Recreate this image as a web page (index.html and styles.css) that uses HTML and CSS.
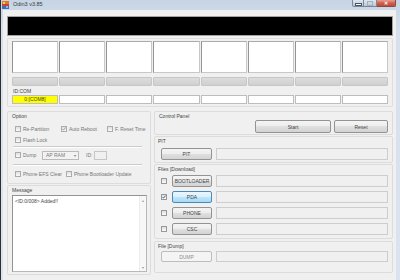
FILE: index.html
```html
<!DOCTYPE html>
<html lang="en">
<head>
  <meta charset="UTF-8">
  <title>Odin3 v3.85</title>
  <link rel="stylesheet" href="styles.css">
</head>
<body>
  <div class="window">
    <div class="titlebar">
      <svg class="appicon" width="7" height="8" viewBox="0 0 7 8">
        <rect x="0" y="0" width="7" height="3" fill="#e2762d"/>
        <rect x="1" y="1" width="2" height="2" fill="#f5d34a"/>
        <rect x="0" y="3" width="7" height="2" fill="#c9443a"/>
        <rect x="0" y="5" width="7" height="3" fill="#3f6fb5"/>
        <rect x="4" y="5" width="2" height="2" fill="#8fb6e4"/>
      </svg>
      <span class="title">Odin3 v3.85</span>
      <div class="controls">
        <span class="ctl min"><i></i></span>
        <span class="ctl max"><i></i></span>
        <span class="ctl close">✕</span>
      </div>
    </div>

    <div class="client">
      <div class="status"></div>

      <div class="ports">
        <div class="slots">
          <div class="slot"></div><div class="slot"></div><div class="slot"></div><div class="slot"></div>
          <div class="slot"></div><div class="slot"></div><div class="slot"></div><div class="slot"></div>
        </div>
        <div class="bars">
          <div class="bar"></div><div class="bar"></div><div class="bar"></div><div class="bar"></div>
          <div class="bar"></div><div class="bar"></div><div class="bar"></div><div class="bar"></div>
        </div>
        <div class="idlabel">ID:COM</div>
        <div class="coms">
          <div class="com on">0:[COM8]</div><div class="com"></div><div class="com"></div><div class="com"></div>
          <div class="com"></div><div class="com"></div><div class="com"></div><div class="com"></div>
        </div>
      </div>

      <div class="main">
        <div class="left">
          <div class="group option">
            <div class="glabel">Option</div>
            <div class="orow first">
              <label class="opt w46"><span class="cb"></span>Re-Partition</label>
              <label class="opt w46"><span class="cb checked"><svg width="4" height="4" viewBox="0 0 4 4"><polyline points="0.5,2 1.5,3.2 3.5,0.6" fill="none" stroke="#8a8a8a" stroke-width="0.8"/></svg></span>Auto Reboot</label>
              <label class="opt"><span class="cb"></span>F. Reset Time</label>
            </div>
            <div class="orow">
              <label class="opt"><span class="cb"></span>Flash Lock</label>
            </div>
            <div class="sep"></div>
            <div class="orow mid">
              <label class="opt w27"><span class="cb"></span>Dump</label>
              <div class="combo">AP RAM<span class="arrow">▾</span></div>
              <span class="idtxt">ID:</span>
              <div class="idbox"></div>
            </div>
            <div class="sep low"></div>
            <div class="orow last">
              <label class="opt w51"><span class="cb"></span>Phone EFS Clear</label>
              <label class="opt"><span class="cb"></span>Phone Bootloader Update</label>
            </div>
          </div>

          <div class="group message">
            <div class="glabel">Message</div>
            <div class="log">
              <div class="logtext">&lt;ID:0/008&gt; Added!!</div>
              <div class="scroll"><span>▴</span><span>▾</span></div>
            </div>
          </div>
        </div>

        <div class="right">
          <div class="group control">
            <div class="glabel">Control Panel</div>
            <div class="ctrlbtns">
              <div class="btn start">Start</div>
              <div class="btn reset">Reset</div>
            </div>
          </div>

          <div class="group pit">
            <div class="glabel">PIT</div>
            <div class="frow">
              <div class="btn wide">PIT</div>
              <div class="path"></div>
            </div>
          </div>

          <div class="group files">
            <div class="glabel">Files [Download]</div>
            <div class="frow">
              <span class="cb"></span>
              <div class="btn file">BOOTLOADER</div>
              <div class="path"></div>
            </div>
            <div class="frow">
              <span class="cb checked"><svg width="4" height="4" viewBox="0 0 4 4"><polyline points="0.5,2 1.5,3.2 3.5,0.6" fill="none" stroke="#2a4d8f" stroke-width="0.8"/></svg></span>
              <div class="btn file hot">PDA</div>
              <div class="path"></div>
            </div>
            <div class="frow">
              <span class="cb"></span>
              <div class="btn file">PHONE</div>
              <div class="path"></div>
            </div>
            <div class="frow">
              <span class="cb"></span>
              <div class="btn file">CSC</div>
              <div class="path"></div>
            </div>
          </div>

          <div class="group dump">
            <div class="glabel">File [Dump]</div>
            <div class="frow">
              <div class="btn wide off">DUMP</div>
              <div class="path"></div>
            </div>
          </div>
        </div>
      </div>
    </div>
  </div>
</body>
</html>
```

FILE: styles.css
```css
body {
  margin: 0;
  width: 400px;
  height: 280px;
  overflow: hidden;
  background: #1c1c1c;
  font-family: "Liberation Sans", Arial, sans-serif;
  font-size: 5px;
  color: #3c3c3c;
}
.window {
  box-sizing: border-box;
  height: 280px;
  display: flex;
  flex-direction: column;
  padding: 0 4px 0 2px;
  border-left: 1px solid #2e2e2e;
  background: linear-gradient(#c6d4e4, #d6e1ec 30px, #dbe4ee);
}
.titlebar {
  height: 10px;
  display: flex;
  align-items: flex-start;
}
.appicon {
  margin: 1px 0 0 -1px;
}
.title {
  margin-left: 4px;
  font-size: 5.5px;
  line-height: 9px;
  color: #3a3a3a;
}
.controls {
  margin-left: auto;
  display: flex;
}
.ctl {
  height: 7px;
  box-sizing: border-box;
  border: 1px solid #7b8794;
  border-top: none;
  display: flex;
  align-items: center;
  justify-content: center;
}
.min, .max {
  width: 12px;
  background: linear-gradient(#dfe7f0, #bac8d8);
}
.min { border-radius: 0 0 0 2px; }
.max { width: 13px; border-left: none; }
.min i {
  width: 5px;
  height: 1px;
  margin-top: 2px;
  background: #fff;
  border: 0.5px solid #4a5563;
}
.max i {
  width: 4px;
  height: 3px;
  border: 1px solid #a4b0be;
}
.close {
  width: 19px;
  border-left: none;
  border-color: #8a4a43;
  border-radius: 0 0 2px 0;
  background: linear-gradient(#e6a195, #d0604f 50%, #c24a36);
  color: #fff;
  font-size: 5px;
  font-weight: bold;
}
.client {
  flex: 1;
  background: #f0f0f0;
  padding: 6px 3px 0 4px;
}
.status {
  height: 18px;
  background: #000;
  border: 1px solid #a3a3a3;
}
.ports {
  margin-top: 2px;
  border: 1px solid #dedede;
  border-radius: 2px;
  padding: 2px 4px 2px 4px;
}
.slots, .bars, .coms {
  display: grid;
  grid-template-columns: repeat(8, 1fr);
  column-gap: 1px;
}
.slots { height: 32px; }
.slot {
  background: #fff;
  border: 1px solid #c8c8c8;
  border-left-color: #939393;
  border-top-color: #ababab;
}
.bars {
  height: 9px;
  margin-top: 4px;
}
.bar {
  background: linear-gradient(#dcdcdc, #d0d0d0);
  border: 1px solid #c6c6c6;
  border-radius: 1px;
}
.idlabel {
  height: 9px;
  line-height: 10px;
  padding-left: 1px;
}
.coms { height: 9px; }
.com {
  background: #fff;
  border: 1px solid #bdbdbd;
  text-align: center;
  line-height: 7px;
}
.com.on {
  background: #ffff00;
  color: #3a3a3a;
}
.main {
  display: flex;
  gap: 3px;
  margin-top: 4px;
}
.left {
  width: 144px;
  display: flex;
  flex-direction: column;
  gap: 1px;
}
.right {
  flex: 1;
  display: flex;
  flex-direction: column;
  gap: 1px;
}
.group {
  box-sizing: border-box;
  border: 1px solid #dcdcdc;
  border-radius: 2px;
  padding: 0 4px;
}
.glabel {
  height: 9px;
  line-height: 9px;
  color: #444;
}
.option { height: 73px; }
.orow {
  height: 10px;
  display: flex;
  align-items: center;
  padding-left: 3px;
  margin-top: 1px;
  color: #767676;
}
.orow.first { margin-top: 3px; }
.orow.mid { margin-top: 2px; }
.orow.last { margin-top: 3px; }
.opt {
  display: flex;
  align-items: center;
  gap: 2px;
  white-space: nowrap;
}
.w46 { width: 46px; }
.w27 { width: 27px; }
.w51 { width: 51px; }
.cb {
  flex: none;
  width: 4px;
  height: 4px;
  border: 1px solid #acacac;
  background: linear-gradient(#dedede, #fbfbfb);
  display: flex;
  align-items: center;
  justify-content: center;
}
.sep {
  margin: 1px 4px 0 1px;
  height: 1px;
  border-top: 1px solid #cbcbcb;
  background: #fff;
}
.sep.low { margin-top: 4px; }
.combo {
  box-sizing: border-box;
  width: 37px;
  height: 9px;
  border: 1px solid #bababa;
  background: #f2f2f2;
  padding-left: 3px;
  line-height: 7px;
  display: flex;
  color: #7a7a7a;
}
.arrow {
  margin-left: auto;
  margin-right: 2px;
  font-size: 4px;
}
.idtxt {
  width: 8px;
  margin-left: 7px;
}
.idbox {
  box-sizing: border-box;
  width: 13px;
  height: 9px;
  border: 1px solid #c6c6c6;
  background: #f0f0f0;
}
.message {
  height: 90px;
  padding-right: 3px;
}
.log {
  box-sizing: border-box;
  height: 77px;
  display: flex;
  background: #fff;
  border: 1px solid #b8b8b8;
  border-top-color: #939393;
  border-left-color: #939393;
}
.logtext {
  flex: 1;
  padding: 2px 0 0 2px;
  color: #444;
}
.scroll {
  width: 6px;
  margin-left: auto;
  display: flex;
  flex-direction: column;
  justify-content: space-between;
  align-items: center;
  background: #f7f7f7;
  border-left: 1px solid #ececec;
  color: #9a9a9a;
  font-size: 4px;
  padding: 2px 0 1px;
}
.control {
  height: 24px;
  display: flex;
  justify-content: space-between;
  padding-right: 4px;
}
.ctrlbtns {
  align-self: flex-end;
  display: flex;
  gap: 3px;
  margin-bottom: 1px;
}
.btn {
  box-sizing: border-box;
  height: 13px;
  border: 1px solid #939393;
  border-radius: 2px;
  background: linear-gradient(#f4f4f4, #ededed 50%, #e0e0e0 50%, #d3d3d3);
  display: flex;
  align-items: center;
  justify-content: center;
  color: #444;
}
.start { width: 76px; }
.reset { width: 54px; }
.pit { height: 27px; padding: 0 4px 0 3px; }
.files { height: 75px; padding: 0 4px 0 3px; }
.dump {
  height: 32px;
  margin-top: 1px;
  padding: 0 4px 0 3px;
}
.frow {
  height: 12px;
  display: flex;
  align-items: center;
  padding-left: 3px;
  margin-top: 4px;
}
.pit .frow { margin-top: 2px; }
.files .frow:nth-child(2) { margin-top: 1px; }
.dump .frow { height: 11px; margin-top: 0; }
.frow .btn { height: 100%; }
.frow .cb {
  border-color: #989898;
  margin-right: 5px;
}
.wide { width: 51px; }
.file { width: 40px; }
.btn.hot {
  border-color: #4a8bbd;
  background: linear-gradient(#eaf6fd, #d9f0fc 50%, #bee6fd 50%, #a7d9f5);
}
.btn.off {
  border-color: #bdbdbd;
  background: #f4f4f4;
  color: #8e8e8e;
}
.path {
  flex: 1;
  height: 100%;
  box-sizing: border-box;
  margin-left: 4px;
  border: 1px solid #cdcdcd;
  background: #f0f0f0;
}
```
